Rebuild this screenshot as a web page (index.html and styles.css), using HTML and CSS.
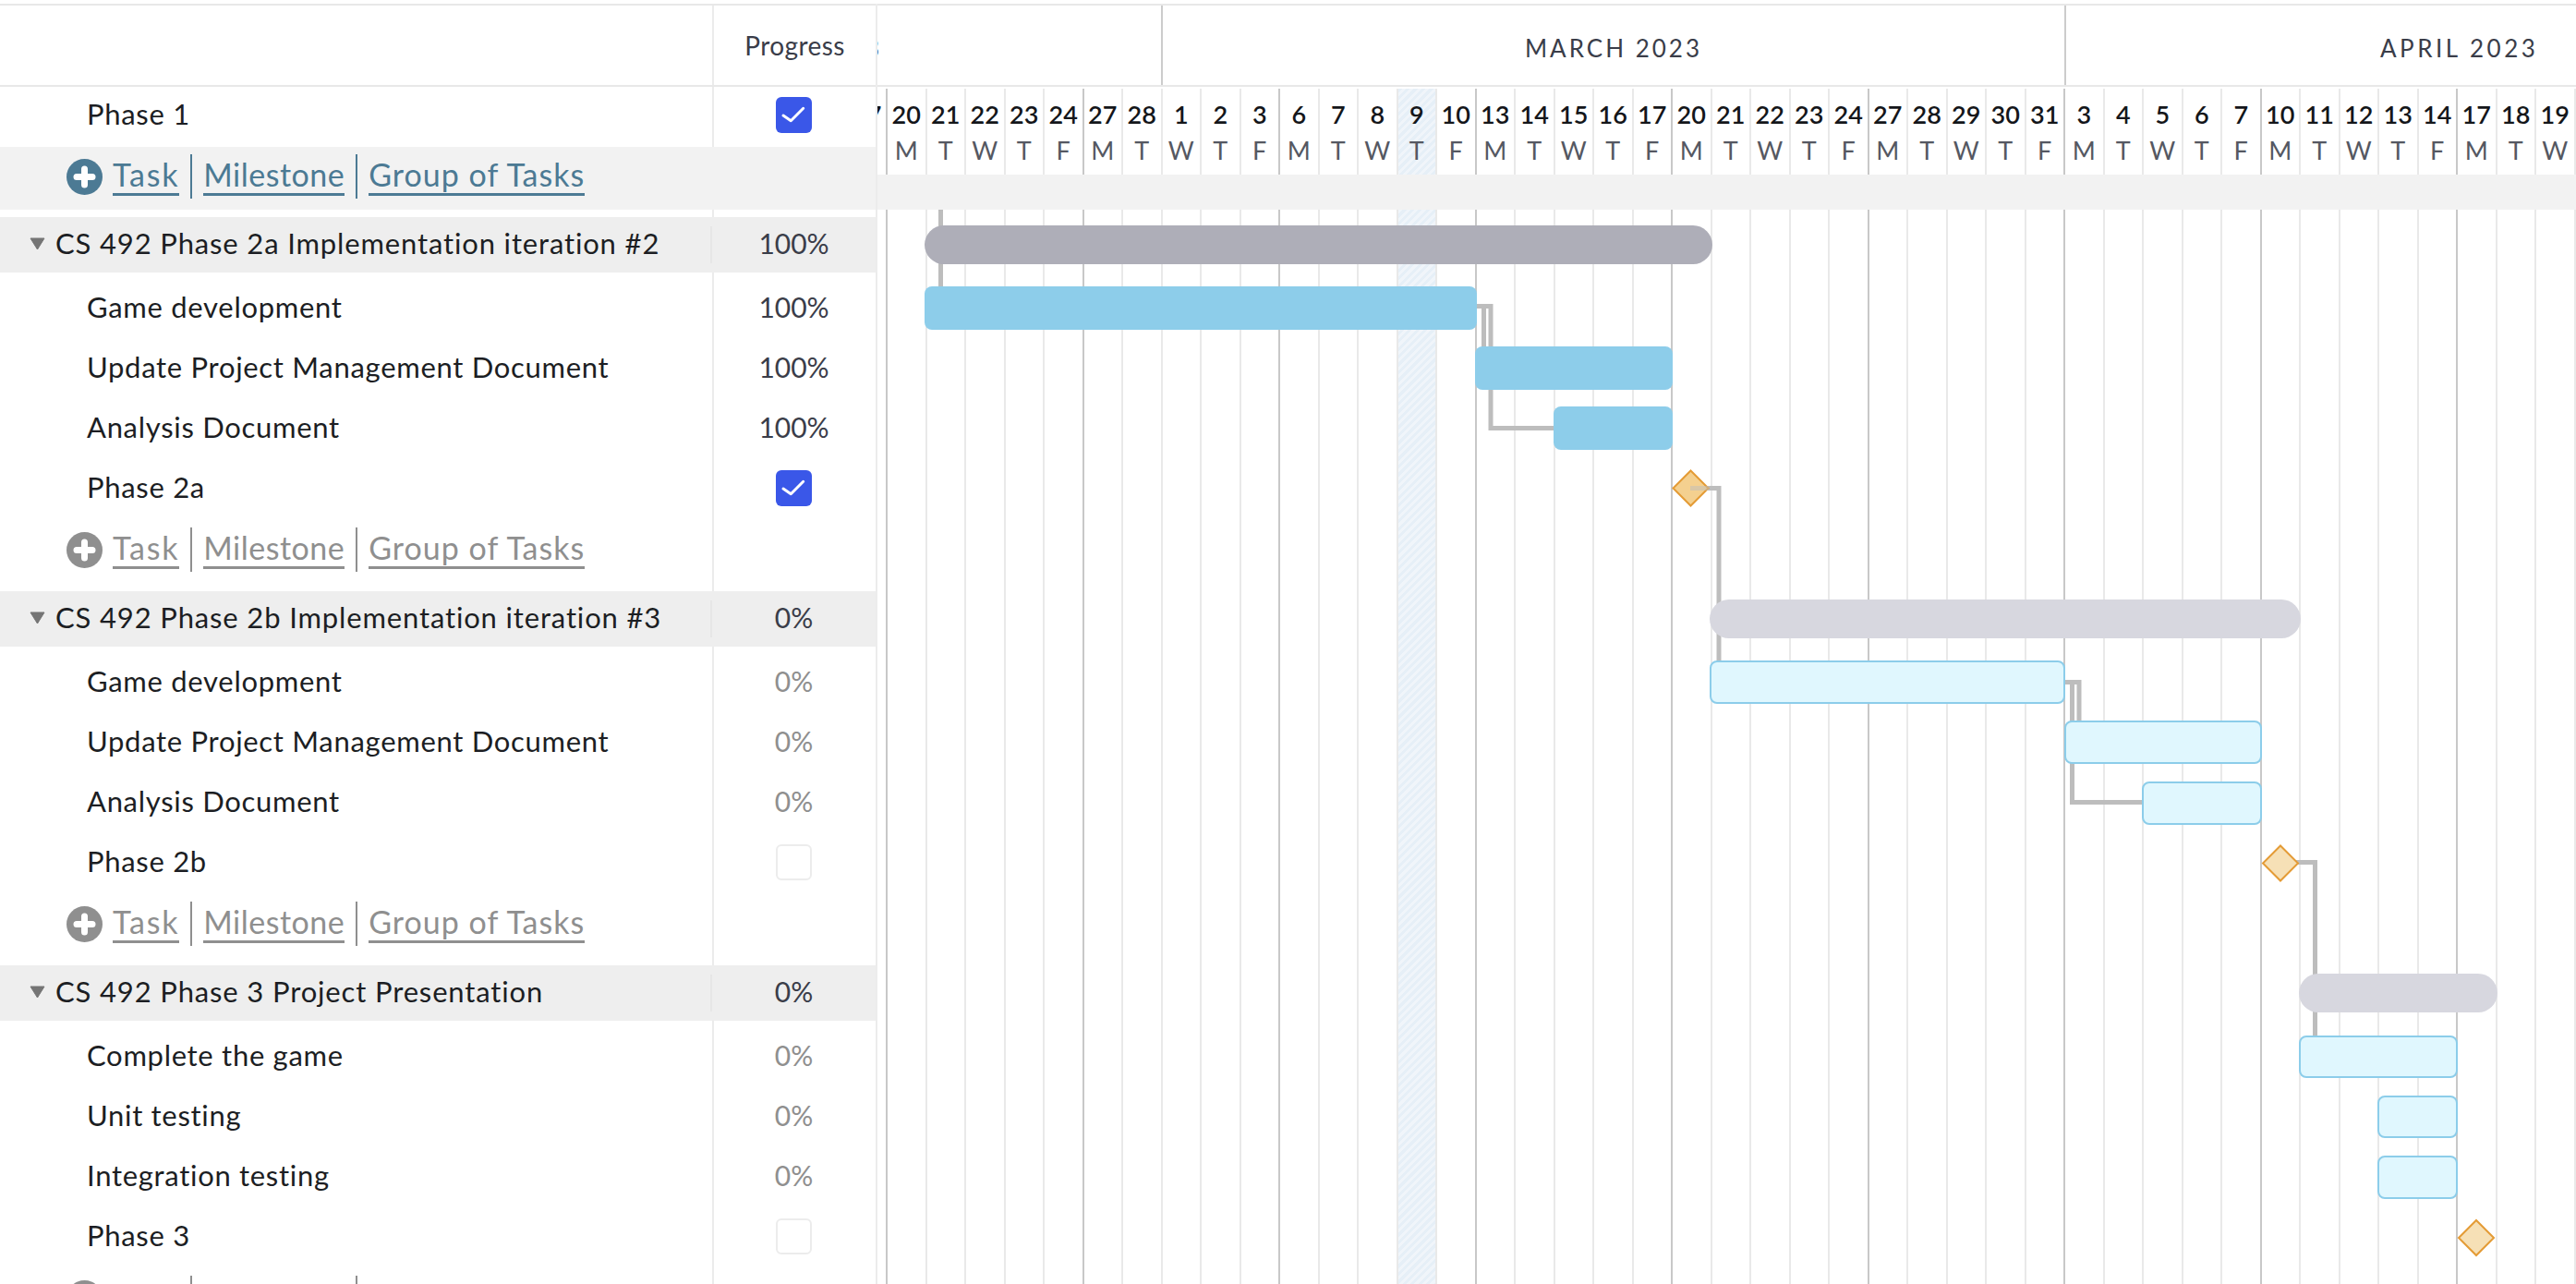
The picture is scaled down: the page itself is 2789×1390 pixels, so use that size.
FILE: index.html
```html
<!DOCTYPE html>
<html lang="en">

<head>
    <meta charset="UTF-8">
    <title>Gantt chart</title>
    <link rel="stylesheet" href="styles.css">
</head>

<body>
    <div class="page">
        <!-- Task list -->
        <div class="panel">
            <div class="panel-head">
                <div class="head-name"></div>
                <div class="head-prog">Progress</div>
            </div>
            <div class="panel-body">
                <div class="row row-first">
                    <div class="name">Phase 1</div>
                    <div class="prog"><span class="check on"><svg viewBox="0 0 39 39"><path d="M8 20l8.300 5.700L29.700 12.300"/></svg></span></div>
                </div>
                <div class="add add-first">
                    <svg class="plus" viewBox="0 0 39 39"><circle cx="19.500" cy="19.500" r="19.500"/><path d="M19.500 11v17M11 19.500h17"/></svg>
                    <a class="add-link">Task</a><span class="pipe"></span><a class="add-link">Milestone</a><span class="pipe"></span><a class="add-link">Group of Tasks</a>
                </div>

                <div class="row group gap-first">
                    <svg class="caret" viewBox="0 0 17 14"><path d="M1 1h15L8.500 13z"/></svg>
                    <div class="name">CS 492 Phase 2a Implementation iteration #2</div>
                    <div class="prog">100%</div>
                </div>
                <div class="row">
                    <div class="name">Game development</div>
                    <div class="prog">100%</div>
                </div>
                <div class="row">
                    <div class="name">Update Project Management Document</div>
                    <div class="prog">100%</div>
                </div>
                <div class="row">
                    <div class="name">Analysis Document</div>
                    <div class="prog">100%</div>
                </div>
                <div class="row">
                    <div class="name">Phase 2a</div>
                    <div class="prog"><span class="check on"><svg viewBox="0 0 39 39"><path d="M8 20l8.300 5.700L29.700 12.300"/></svg></span></div>
                </div>
                <div class="add">
                    <svg class="plus" viewBox="0 0 39 39"><circle cx="19.500" cy="19.500" r="19.500"/><path d="M19.500 11v17M11 19.500h17"/></svg>
                    <a class="add-link">Task</a><span class="pipe"></span><a class="add-link">Milestone</a><span class="pipe"></span><a class="add-link">Group of Tasks</a>
                </div>

                <div class="row group">
                    <svg class="caret" viewBox="0 0 17 14"><path d="M1 1h15L8.500 13z"/></svg>
                    <div class="name">CS 492 Phase 2b Implementation iteration #3</div>
                    <div class="prog">0%</div>
                </div>
                <div class="row">
                    <div class="name">Game development</div>
                    <div class="prog muted">0%</div>
                </div>
                <div class="row">
                    <div class="name">Update Project Management Document</div>
                    <div class="prog muted">0%</div>
                </div>
                <div class="row">
                    <div class="name">Analysis Document</div>
                    <div class="prog muted">0%</div>
                </div>
                <div class="row">
                    <div class="name">Phase 2b</div>
                    <div class="prog"><span class="check"></span></div>
                </div>
                <div class="add">
                    <svg class="plus" viewBox="0 0 39 39"><circle cx="19.500" cy="19.500" r="19.500"/><path d="M19.500 11v17M11 19.500h17"/></svg>
                    <a class="add-link">Task</a><span class="pipe"></span><a class="add-link">Milestone</a><span class="pipe"></span><a class="add-link">Group of Tasks</a>
                </div>

                <div class="row group">
                    <svg class="caret" viewBox="0 0 17 14"><path d="M1 1h15L8.500 13z"/></svg>
                    <div class="name">CS 492 Phase 3 Project Presentation</div>
                    <div class="prog">0%</div>
                </div>
                <div class="row">
                    <div class="name">Complete the game</div>
                    <div class="prog muted">0%</div>
                </div>
                <div class="row">
                    <div class="name">Unit testing</div>
                    <div class="prog muted">0%</div>
                </div>
                <div class="row">
                    <div class="name">Integration testing</div>
                    <div class="prog muted">0%</div>
                </div>
                <div class="row">
                    <div class="name">Phase 3</div>
                    <div class="prog"><span class="check"></span></div>
                </div>
                <div class="add add-last">
                    <svg class="plus" viewBox="0 0 39 39"><circle cx="19.500" cy="19.500" r="19.500"/><path d="M19.500 11v17M11 19.500h17"/></svg>
                    <span class="pipe pipe-a"></span><span class="pipe pipe-b"></span>
                </div>
            </div>
        </div>

        <!-- Timeline -->
        <div class="chart">
            <div class="months">
                <div class="month month-feb"><span>3</span></div>
                <div class="month month-mar">MARCH 2023</div>
                <div class="month month-apr"><span>APRIL 2023</span></div>
            </div>
            <div class="days">
                <div class="day"><b>17</b><i>F</i></div>
                <div class="day major"><b>20</b><i>M</i></div>
                <div class="day"><b>21</b><i>T</i></div>
                <div class="day"><b>22</b><i>W</i></div>
                <div class="day"><b>23</b><i>T</i></div>
                <div class="day"><b>24</b><i>F</i></div>
                <div class="day major"><b>27</b><i>M</i></div>
                <div class="day"><b>28</b><i>T</i></div>
                <div class="day"><b>1</b><i>W</i></div>
                <div class="day"><b>2</b><i>T</i></div>
                <div class="day"><b>3</b><i>F</i></div>
                <div class="day major"><b>6</b><i>M</i></div>
                <div class="day"><b>7</b><i>T</i></div>
                <div class="day"><b>8</b><i>W</i></div>
                <div class="day today"><b>9</b><i>T</i></div>
                <div class="day"><b>10</b><i>F</i></div>
                <div class="day major"><b>13</b><i>M</i></div>
                <div class="day"><b>14</b><i>T</i></div>
                <div class="day"><b>15</b><i>W</i></div>
                <div class="day"><b>16</b><i>T</i></div>
                <div class="day"><b>17</b><i>F</i></div>
                <div class="day major"><b>20</b><i>M</i></div>
                <div class="day"><b>21</b><i>T</i></div>
                <div class="day"><b>22</b><i>W</i></div>
                <div class="day"><b>23</b><i>T</i></div>
                <div class="day"><b>24</b><i>F</i></div>
                <div class="day major"><b>27</b><i>M</i></div>
                <div class="day"><b>28</b><i>T</i></div>
                <div class="day"><b>29</b><i>W</i></div>
                <div class="day"><b>30</b><i>T</i></div>
                <div class="day"><b>31</b><i>F</i></div>
                <div class="day major"><b>3</b><i>M</i></div>
                <div class="day"><b>4</b><i>T</i></div>
                <div class="day"><b>5</b><i>W</i></div>
                <div class="day"><b>6</b><i>T</i></div>
                <div class="day"><b>7</b><i>F</i></div>
                <div class="day major"><b>10</b><i>M</i></div>
                <div class="day"><b>11</b><i>T</i></div>
                <div class="day"><b>12</b><i>W</i></div>
                <div class="day"><b>13</b><i>T</i></div>
                <div class="day"><b>14</b><i>F</i></div>
                <div class="day major"><b>17</b><i>M</i></div>
                <div class="day"><b>18</b><i>T</i></div>
                <div class="day"><b>19</b><i>W</i></div>
                <div class="day last"></div>
            </div>
            <div class="band"></div>

            <!-- viewBox uses page coordinates -->
            <svg class="gantt" viewBox="950 0 1839 1390">
                <path class="link" d="M1018.500 227V320"/>
                <path class="link" d="M1595 331.500H1614V380M1606.500 331.500V380M1614 331.500V463.500H1690"/>
                <path class="link" d="M1830 528.500H1861V720"/>
                <path class="link" d="M2230 738.500H2251V785M2243.500 738.500V868.500H2325"/>
                <path class="link" d="M2469 933.500H2506.500V1125"/>

                <rect class="bar-group done" x="1001" y="244" width="853" height="42" rx="21"/>
                <rect class="bar-done" x="1001" y="310" width="598" height="47" rx="8"/>
                <rect class="bar-done" x="1597" y="375" width="214" height="47" rx="8"/>
                <rect class="bar-done" x="1682" y="440" width="129" height="47" rx="8"/>
                <polygon class="ms done" points="1830.500,509.500 1849.500,528.500 1830.500,547.500 1811.500,528.500"/>
                <path class="link-over" d="M1830 528.500H1850"/>

                <rect class="bar-group" x="1851" y="649" width="640" height="42" rx="21"/>
                <rect class="bar-todo" x="1852" y="716" width="383" height="45" rx="7"/>
                <rect class="bar-todo" x="2236" y="781" width="212" height="45" rx="7"/>
                <rect class="bar-todo" x="2320" y="847" width="128" height="45" rx="7"/>
                <polygon class="ms" points="2469,915.500 2488,934.500 2469,953.500 2450,934.500"/>

                <rect class="bar-group" x="2489" y="1054" width="215" height="42" rx="21"/>
                <rect class="bar-todo" x="2490" y="1122" width="170" height="44" rx="7"/>
                <rect class="bar-todo" x="2575" y="1187" width="85" height="44" rx="7"/>
                <rect class="bar-todo" x="2575" y="1252" width="85" height="45" rx="7"/>
                <polygon class="ms" points="2681,1321 2700,1340 2681,1359 2662,1340"/>
            </svg>
        </div>
    </div>
</body>

</html>
```

FILE: styles.css
```css
html,
body {
    margin: 0;
    height: 100%;
    overflow: hidden;
    background-color: white;
}

body {
    font-family: Lato, "Open Sans", sans-serif;
    color: #1c1e23;
}

.page {
    display: flex;
    height: 1390px;
    padding-top: 4px;
    box-sizing: border-box;
}

/* task list */

.panel {
    width: 950px;
    flex-shrink: 0;
    border-right: 2px solid #ececec;
    box-sizing: border-box;
    overflow: hidden;
}

.panel-head {
    display: flex;
    height: 90px;
    box-sizing: border-box;
    border-top: 2px solid #e8e8e8;
    border-bottom: 2px solid #e8e8e8;
}

.head-name {
    width: 771px;
    flex-shrink: 0;
}

.head-prog {
    flex: 1;
    border-left: 2px solid #ebebeb;
    text-align: center;
    font-size: 28px;
    letter-spacing: 0.4px;
    line-height: 86px;
    color: #3a3d49;
}

.panel-body {
    background: linear-gradient(#ebebeb, #ebebeb) 771px 0 / 2px 100% no-repeat;
}

.row {
    display: flex;
    align-items: center;
    height: 65px;
    font-size: 30px;
}

.row-first {
    height: 61px;
    padding-bottom: 4px;
}

.name {
    flex: 1;
    padding-left: 94px;
    padding-bottom: 4px;
    font-size: 31px;
    letter-spacing: 0.7px;
}

.prog {
    width: 177px;
    flex-shrink: 0;
    display: flex;
    justify-content: center;
    align-items: center;
    padding-bottom: 4px;
    box-sizing: border-box;
    color: #3a3d49;
}

.muted {
    color: #8f8f8f;
}

.group {
    height: 60px;
    margin-top: 11px;
    margin-bottom: 6px;
    background-color: #eeeeee;
    padding-left: 32px;
}

.gap-first {
    margin-top: 8px;
}

.group .name {
    padding-left: 11px;
    letter-spacing: 0.85px;
}

.group .prog {
    border-left: 2px solid #e6e6e6;
    width: 179px;
}

.caret {
    width: 17px;
    height: 14px;
    margin-bottom: 2px;
    fill: #757575;
    stroke: #757575;
    stroke-linejoin: round;
}

.check {
    display: block;
    width: 39px;
    height: 39px;
    margin-top: 4px;
    box-sizing: border-box;
    border: 2px solid #ececec;
    border-radius: 6px;
}

.check.on {
    background-color: #3a57e8;
    border: 0;
}

.check svg {
    display: block;
    fill: none;
    stroke: white;
    stroke-width: 3;
    stroke-linecap: round;
    stroke-linejoin: round;
}

.add {
    display: flex;
    align-items: flex-start;
    height: 58px;
    padding-top: 10px;
    padding-left: 72px;
    font-size: 34px;
    letter-spacing: 0.5px;
    color: #8f8f8f;
}

.add-first {
    height: 60px;
    padding-top: 8px;
    background-color: #f2f2f2;
    color: #4c7a94;
}

.plus {
    width: 39px;
    height: 39px;
    margin-top: 5px;
    margin-right: 11px;
    flex-shrink: 0;
    fill: currentColor;
}

.plus path {
    fill: none;
    stroke: white;
    stroke-width: 7;
    stroke-linecap: round;
}

.add-link {
    height: 42px;
    line-height: 43px;
    white-space: nowrap;
    border-bottom: 3px solid currentColor;
}

.add-link:nth-of-type(1) {
    letter-spacing: 1.8px;
}

.add-link:nth-of-type(3) {
    letter-spacing: 1px;
}

.pipe {
    width: 2px;
    height: 48px;
    flex-shrink: 0;
    margin: 0 12px;
    background-color: currentColor;
}

/* the last row is cut by the window, only the top of it shows */
.pipe-a {
    margin-left: 84px;
}

.pipe-b {
    margin-left: 165px;
}

/* timeline */

.chart {
    position: relative;
    flex: 1;
    min-width: 0;
    overflow: hidden;
}

.months {
    display: flex;
    height: 90px;
    box-sizing: border-box;
    border-top: 2px solid #e8e8e8;
    border-bottom: 2px solid #e8e8e8;
    font-size: 26px;
    letter-spacing: 3px;
    line-height: 92px;
    color: #3a3d49;
}

.month {
    flex-shrink: 0;
    text-align: center;
    white-space: nowrap;
    overflow: hidden;
}

.month-feb {
    width: 307px;
    text-align: left;
}

.month-feb span {
    margin-left: -13px;
}

.month-mar {
    width: 978px;
    border-left: 2px solid #cccccc;
    box-sizing: border-box;
}

.month-apr {
    flex: 1;
    border-left: 2px solid #cccccc;
    text-align: left;
}

.month-apr span {
    margin-left: 340px;
    letter-spacing: 3.5px;
}

.days {
    display: flex;
    height: 1296px;
    margin-top: 2px;
    margin-left: -33.5px;
}

.day {
    width: 42.5px;
    flex-shrink: 0;
    box-sizing: border-box;
    border-left: 2px solid #e9e9e9;
    text-align: center;
}

.day.major {
    border-left-color: #c8c8c8;
}

.day.today {
    background: repeating-linear-gradient(135deg, #e6eff7 0, #e6eff7 3px, #f0f5fa 3px, #f0f5fa 6px);
}

.day b {
    display: block;
    margin-top: 12px;
    font-size: 27px;
    font-weight: 600;
    line-height: 32px;
    color: #14161a;
}

.day i {
    display: block;
    margin-top: 7px;
    font-size: 27px;
    font-style: normal;
    font-weight: 400;
    line-height: 32px;
    color: #555862;
}

.band {
    position: absolute;
    left: 0;
    right: 0;
    top: 185px;
    height: 38px;
    background-color: #f2f2f2;
}

.gantt {
    position: absolute;
    left: 0;
    top: -4px;
    width: 1839px;
    height: 1390px;
}

.link {
    fill: none;
    stroke: #bdbdbd;
    stroke-width: 5;
}

.link-over {
    fill: none;
    stroke: #bdbdbd;
    stroke-width: 5;
    opacity: 0.5;
}

.bar-group {
    fill: #d7d7df;
}

.bar-group.done {
    fill: #aeaeb8;
}

.bar-done {
    fill: #8dcdea;
}

.bar-todo {
    fill: #e0f7fe;
    stroke: #8ccdea;
    stroke-width: 2;
}

.ms {
    fill: #f6e0b6;
    stroke: #e49b35;
    stroke-width: 2;
}

.ms.done {
    fill: #f4d08f;
}
```
